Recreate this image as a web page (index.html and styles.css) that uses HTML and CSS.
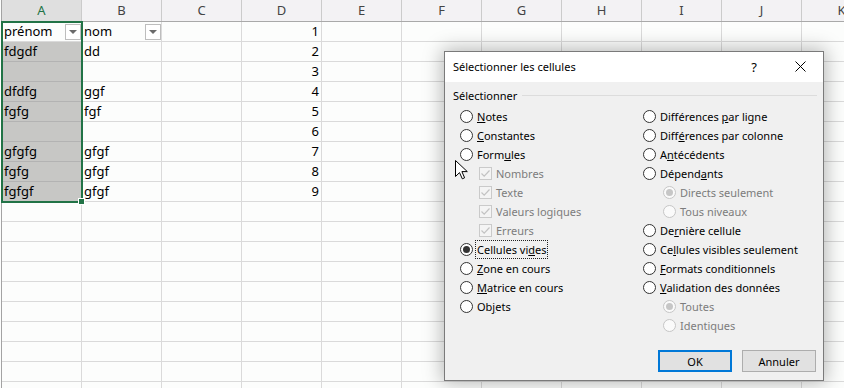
FILE: index.html
```html
<!DOCTYPE html>
<html lang="fr">
  <head>
    <meta charset="utf-8" />
    <title>Sélectionner les cellules</title>
    <link rel="stylesheet" href="styles.css">
  </head>
  <body>
    <div class="sheet">
      <div class="heads">
        <div class="ch sel">A</div><div class="ch">B</div><div class="ch">C</div><div class="ch">D</div><div class="ch">E</div><div class="ch">F</div><div class="ch">G</div><div class="ch">H</div><div class="ch">I</div><div class="ch">J</div><div class="ch">K</div>
      </div>
      <div class="row">
        <div class="c head">prénom<span class="filter"></span></div><div class="c head">nom<span class="filter"></span></div><div class="c"></div><div class="c num">1</div>
        <div class="c"></div><div class="c"></div><div class="c"></div><div class="c"></div><div class="c"></div><div class="c"></div><div class="c"></div>
      </div>
      <div class="row">
        <div class="c sel">fdgdf</div><div class="c">dd</div><div class="c"></div><div class="c num">2</div>
        <div class="c"></div><div class="c"></div><div class="c"></div><div class="c"></div><div class="c"></div><div class="c"></div><div class="c"></div>
      </div>
      <div class="row">
        <div class="c sel"></div><div class="c"></div><div class="c"></div><div class="c num">3</div>
        <div class="c"></div><div class="c"></div><div class="c"></div><div class="c"></div><div class="c"></div><div class="c"></div><div class="c"></div>
      </div>
      <div class="row">
        <div class="c sel">dfdfg</div><div class="c">ggf</div><div class="c"></div><div class="c num">4</div>
        <div class="c"></div><div class="c"></div><div class="c"></div><div class="c"></div><div class="c"></div><div class="c"></div><div class="c"></div>
      </div>
      <div class="row">
        <div class="c sel">fgfg</div><div class="c">fgf</div><div class="c"></div><div class="c num">5</div>
        <div class="c"></div><div class="c"></div><div class="c"></div><div class="c"></div><div class="c"></div><div class="c"></div><div class="c"></div>
      </div>
      <div class="row">
        <div class="c sel"></div><div class="c"></div><div class="c"></div><div class="c num">6</div>
        <div class="c"></div><div class="c"></div><div class="c"></div><div class="c"></div><div class="c"></div><div class="c"></div><div class="c"></div>
      </div>
      <div class="row">
        <div class="c sel">gfgfg</div><div class="c">gfgf</div><div class="c"></div><div class="c num">7</div>
        <div class="c"></div><div class="c"></div><div class="c"></div><div class="c"></div><div class="c"></div><div class="c"></div><div class="c"></div>
      </div>
      <div class="row">
        <div class="c sel">fgfg</div><div class="c">gfgf</div><div class="c"></div><div class="c num">8</div>
        <div class="c"></div><div class="c"></div><div class="c"></div><div class="c"></div><div class="c"></div><div class="c"></div><div class="c"></div>
      </div>
      <div class="row">
        <div class="c sel">fgfgf</div><div class="c">gfgf</div><div class="c"></div><div class="c num">9</div>
        <div class="c"></div><div class="c"></div><div class="c"></div><div class="c"></div><div class="c"></div><div class="c"></div><div class="c"></div>
      </div>
      <div class="blank"></div>
    </div>

    <!-- plage A1:A9 sélectionnée -->
    <div class="selection"><span class="handle"></span></div>

    <div class="dialog">
      <div class="titlebar">
        <div class="title">Sélectionner les cellules</div>
        <div class="cap-btn">?</div>
        <div class="cap-btn">
          <svg width="11" height="11" viewBox="0 0 11 11"><path d="M0.5 0.5L10.5 10.5M10.5 0.5L0.5 10.5" stroke="#000" stroke-width="1" fill="none"/></svg>
        </div>
      </div>
      <div class="body">
        <div class="group-head">
          <span>Sélectionner</span>
          <span class="group-line"></span>
        </div>
        <div class="opts">
          <div class="col">
            <div class="opt"><span class="radio"></span><span><u>N</u>otes</span></div>
            <div class="opt"><span class="radio"></span><span><u>C</u>onstantes</span></div>
            <div class="opt"><span class="radio"></span><span>Form<u>u</u>les</span></div>
            <div class="opt sub off"><span class="check"><svg width="11" height="11" viewBox="0 0 11 11"><path d="M1.5 5.5L4.2 8.2L9.5 2.5" stroke="#c3c3c3" stroke-width="1.2" fill="none"/></svg></span><span>Nombres</span></div>
            <div class="opt sub off"><span class="check"><svg width="11" height="11" viewBox="0 0 11 11"><path d="M1.5 5.5L4.2 8.2L9.5 2.5" stroke="#c3c3c3" stroke-width="1.2" fill="none"/></svg></span><span>Texte</span></div>
            <div class="opt sub off"><span class="check"><svg width="11" height="11" viewBox="0 0 11 11"><path d="M1.5 5.5L4.2 8.2L9.5 2.5" stroke="#c3c3c3" stroke-width="1.2" fill="none"/></svg></span><span>Valeurs logiques</span></div>
            <div class="opt sub off"><span class="check"><svg width="11" height="11" viewBox="0 0 11 11"><path d="M1.5 5.5L4.2 8.2L9.5 2.5" stroke="#c3c3c3" stroke-width="1.2" fill="none"/></svg></span><span>Erreurs</span></div>
            <div class="opt"><span class="radio on"></span><span class="focus">Cellules vi<u>d</u>es</span></div>
            <div class="opt"><span class="radio"></span><span><u>Z</u>one en cours</span></div>
            <div class="opt"><span class="radio"></span><span><u>M</u>atrice en cours</span></div>
            <div class="opt"><span class="radio"></span><span>Ob<u>j</u>ets</span></div>
          </div>
          <div class="col">
            <div class="opt"><span class="radio"></span><span>Différences <u>p</u>ar ligne</span></div>
            <div class="opt"><span class="radio"></span><span>Diff<u>é</u>rences par colonne</span></div>
            <div class="opt"><span class="radio"></span><span>A<u>n</u>técédents</span></div>
            <div class="opt"><span class="radio"></span><span>Dépend<u>a</u>nts</span></div>
            <div class="opt sub-r off"><span class="radio on"></span><span>Directs seulement</span></div>
            <div class="opt sub-r off"><span class="radio"></span><span>Tous niveaux</span></div>
            <div class="opt"><span class="radio"></span><span>De<u>r</u>nière cellule</span></div>
            <div class="opt"><span class="radio"></span><span>Ce<u>l</u>lules visibles seulement</span></div>
            <div class="opt"><span class="radio"></span><span><u>F</u>ormats conditionnels</span></div>
            <div class="opt"><span class="radio"></span><span><u>V</u>alidation des données</span></div>
            <div class="opt sub-r off"><span class="radio on"></span><span>Toutes</span></div>
            <div class="opt sub-r off"><span class="radio"></span><span>Identiques</span></div>
          </div>
        </div>
        <div class="actions">
          <button class="btn default">OK</button>
          <button class="btn">Annuler</button>
        </div>
      </div>
    </div>

    <svg class="cursor" width="14" height="20" viewBox="0 0 14 20">
      <path d="M0.5 0.5L0.5 16.5L4.5 12.6L7.3 18.8L9.6 17.8L6.9 11.6L12.3 11.6Z" fill="#fff" stroke="#000" stroke-width="1" stroke-linejoin="miter"/>
    </svg>
  </body>
</html>
```

FILE: styles.css
```css
html {
  height: 100%;
}

body {
  margin: 0;
  width: 844px;
  height: 388px;
  overflow: hidden;
  position: relative;
  background: #fcfdfc;
  font-family: "Noto Sans", "Liberation Sans", sans-serif;
  color: #000;
}

.sheet {
  margin-left: 1px;
  border-left: 1px solid #a3a3a3;
  width: max-content;
}

.heads {
  display: flex;
  height: 21px;
  background: #f3f2f4;
  border-bottom: 1px solid #a9a9a9;
}

.ch {
  width: 80px;
  box-sizing: border-box;
  border-right: 1px solid #cbcbcb;
  text-align: center;
  line-height: 21px;
  font-size: 13px;
  color: #444;
}

.ch.sel {
  background: #dfdfdf;
  color: #217346;
}

.row {
  display: flex;
  height: 20px;
}

.c {
  width: 80px;
  height: 20px;
  box-sizing: border-box;
  padding: 0 2px;
  border-right: 1px solid #dadada;
  border-bottom: 1px solid #dadada;
  font-size: 13px;
  line-height: 19px;
  white-space: nowrap;
}

.c.sel {
  background: #c7c7c5;
  border-bottom-color: #b3b3b3;
}

.c.num {
  text-align: right;
}

.c.head {
  display: flex;
  justify-content: space-between;
  align-items: center;
}

.filter {
  width: 16px;
  height: 16px;
  box-sizing: border-box;
  margin-right: -2px;
  border: 1px solid #bdbdbd;
  background: #fff;
  display: grid;
  place-items: center;
}

.filter::after {
  content: "";
  border-left: 4px solid transparent;
  border-right: 4px solid transparent;
  border-top: 4px solid #6a6a6a;
}

.blank {
  height: 200px;
  width: 880px;
  background-image:
    repeating-linear-gradient(to right, transparent 0 79px, #dadada 79px 80px),
    repeating-linear-gradient(to bottom, transparent 0 19px, #dadada 19px 20px);
}

.selection {
  position: absolute;
  left: 1px;
  top: 21px;
  width: 82px;
  height: 182px;
  box-sizing: border-box;
  border: 2px solid #217346;
}

.handle {
  position: absolute;
  right: -4px;
  bottom: -4px;
  width: 5px;
  height: 5px;
  background: #217346;
  border: 1px solid #fff;
}

/* boîte de dialogue */
.dialog {
  position: absolute;
  left: 444px;
  top: 51px;
  width: 380px;
  height: 330px;
  box-sizing: border-box;
  border: 1px solid #7a7a7a;
  box-shadow: 0 0 18px 2px rgba(0, 0, 0, 0.28);
  display: flex;
  flex-direction: column;
  font-size: 11px;
}

.titlebar {
  height: 30px;
  flex: none;
  background: #fff;
  display: flex;
  align-items: center;
  padding-left: 8px;
  padding-bottom: 1px;
  box-sizing: border-box;
}

.title {
  flex: 1;
}

.cap-btn {
  width: 46px;
  height: 29px;
  display: flex;
  align-items: center;
  justify-content: center;
  font-size: 13px;
}

.body {
  flex: 1;
  background: #f0f0f0;
  padding: 5px 6px 0 8px;
}

.group-head {
  display: flex;
  align-items: center;
  gap: 5px;
  height: 16px;
}

.group-line {
  flex: 1;
  border-top: 1px solid #dcdcdc;
}

.opts {
  display: grid;
  grid-template-columns: 183px 1fr;
  margin-top: 4px;
  padding-left: 7px;
  height: 228px;
}

.opt {
  display: flex;
  align-items: center;
  gap: 4px;
  height: 19px;
  white-space: nowrap;
}

.opt.sub {
  padding-left: 19px;
}

.opt.sub-r {
  padding-left: 20px;
}

.opt.off {
  color: #7c7c7c;
}

.radio {
  width: 13px;
  height: 13px;
  box-sizing: border-box;
  flex: none;
  border: 1px solid #333;
  border-radius: 50%;
  background: #fff;
  display: grid;
  place-items: center;
}

.radio.on::after {
  content: "";
  width: 7px;
  height: 7px;
  border-radius: 50%;
  background: #333;
}

.off .radio {
  border-color: #c6c6c6;
  background: #fafafa;
}

.off .radio.on::after {
  background: #c6c6c6;
}

.check {
  width: 13px;
  height: 13px;
  box-sizing: border-box;
  flex: none;
  border: 1px solid #cacaca;
  background: #f4f4f4;
  display: grid;
  place-items: center;
}

.focus {
  outline: 1px dotted #222;
  outline-offset: 1px;
}

.actions {
  display: flex;
  justify-content: flex-end;
  gap: 10px;
  margin-top: 15px;
  padding-right: 1px;
}

.btn {
  width: 74px;
  height: 22px;
  box-sizing: border-box;
  border: 1px solid #adadad;
  background: #e1e1e1;
  font-family: inherit;
  font-size: 11px;
  color: #000;
  padding: 0;
}

.btn.default {
  border: 2px solid #0078d7;
}

.cursor {
  position: absolute;
  left: 455px;
  top: 160px;
}
```
